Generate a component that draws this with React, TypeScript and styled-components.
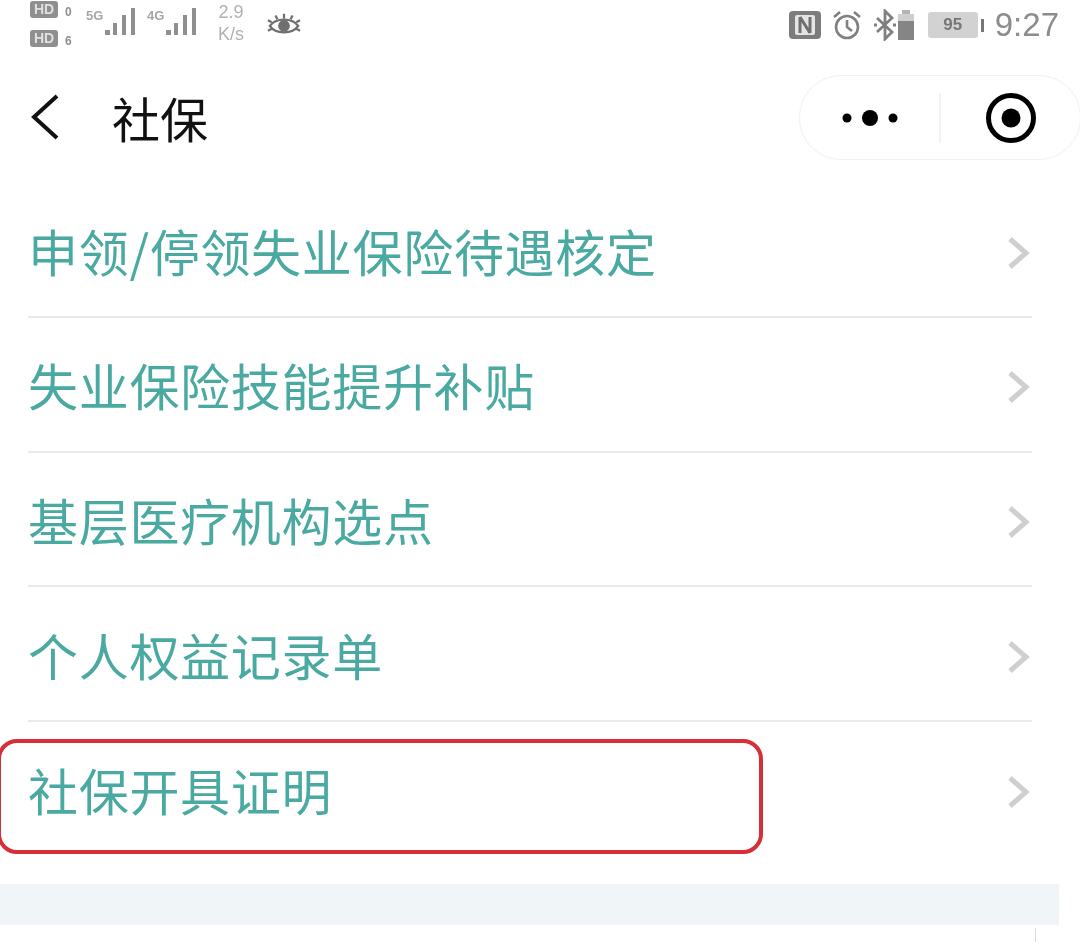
import React from "react";
import styled, { createGlobalStyle } from "styled-components";

const GlobalStyle = createGlobalStyle`
  html, body {
    margin: 0;
    padding: 0;
    background: #fff;
    overflow: hidden;
  }
  body {
    font-family: "Noto Sans CJK SC", "Liberation Sans", sans-serif;
  }
`;

/* the reference is an upscaled phone capture, so everything is a little soft */
const Page = styled.div`
  width: 1080px;
  height: 942px;
  overflow: hidden;
  position: relative;
  background: #fff;
  filter: blur(0.7px);
`;

const StatusBar = styled.div`
  height: 50px;
  padding: 0 21px 0 30px;
  display: flex;
  align-items: center;
  justify-content: space-between;
  color: #8a8a8a;
  font-family: "Liberation Sans", sans-serif;
`;

const StatusGroup = styled.div`
  display: flex;
  align-items: center;
`;

const HdStack = styled.div`
  width: 56px;
  display: flex;
  flex-direction: column;
  gap: 12px;
  margin-top: -3px;
`;

const HdRow = styled.div`
  display: flex;
  align-items: flex-end;
  gap: 7px;
  font-size: 12px;
  line-height: 12px;
  font-weight: 700;
  color: #8f8f8f;
`;

const HdBadge = styled.span`
  width: 28px;
  height: 17px;
  border-radius: 3px;
  background: #8f8f8f;
  color: #e0e0e0;
  font-size: 14px;
  font-weight: 700;
  line-height: 17px;
  text-align: center;
`;

const Signal = styled.div`
  margin-top: -6px;
  position: relative;
  width: 61px;
  height: 30px;
`;

const SignalLabel = styled.span`
  position: absolute;
  left: 0;
  top: 1px;
  font-size: 13px;
  font-weight: 700;
  color: #a6a6a6;
`;

const Speed = styled.div`
  width: 40px;
  margin: -4px 16px 0 3px;
  font-size: 18px;
  line-height: 22px;
  text-align: center;
  color: #b0b0b0;
`;

const IconGap = styled.span<{ $w: number }>`
  width: ${(p) => p.$w}px;
`;

const BatteryPill = styled.div`
  width: 50px;
  height: 26px;
  margin: 0 3px 0 13px;
  border-radius: 3px;
  background: #d2d2d2;
  color: #777;
  font-size: 17px;
  font-weight: 700;
  line-height: 26px;
  text-align: center;
`;

const BatteryTip = styled.div`
  width: 3px;
  height: 13px;
  margin-right: 11px;
  background: #777;
`;

const Clock = styled.span`
  font-size: 33px;
  color: #8c8c8c;
`;

const NavBar = styled.div`
  height: 133.5px;
  display: flex;
  align-items: center;
  position: relative;
  padding-left: 30px;
`;

const NavTitle = styled.span`
  margin-left: 52px;
  font-size: 48px;
  color: #111;
`;

const Capsule = styled.div`
  position: absolute;
  right: -1px;
  top: 25px;
  width: 282px;
  height: 85px;
  box-sizing: border-box;
  border: 1.5px solid #f1f1f1;
  border-radius: 42px;
  display: flex;
  align-items: center;
`;

const CapsuleSide = styled.div`
  flex: 1;
  height: 50px;
  display: flex;
  align-items: center;
  justify-content: center;
  & + & {
    border-left: 2px solid #f3f3f3;
  }
`;

const List = styled.div`
  display: flex;
  flex-direction: column;
`;

const Row = styled.div<{ $last?: boolean }>`
  width: 1004px;
  height: 134.6px;
  margin-left: 28px;
  box-sizing: border-box;
  display: flex;
  align-items: center;
  justify-content: space-between;
  padding-right: 1px;
  border-bottom: ${(p) => (p.$last ? "none" : "2px solid #e9e9e9")};
`;

const RowLabel = styled.span`
  font-size: 50px;
  font-weight: 400;
  letter-spacing: 0.7px;
  line-height: 60px;
  color: #4aa9a1;
`;

const ChevronSlot = styled.span`
  display: flex;
  margin-top: 6px;
`;

const Highlight = styled.div`
  position: absolute;
  left: -3px;
  top: 739px;
  width: 766px;
  height: 115px;
  box-sizing: border-box;
  border: 4px solid #d62f38;
  border-radius: 20px;
`;

const Band = styled.div`
  width: 1059px;
  height: 41px;
  margin-top: 28px;
  background: #f0f6f7;
`;

const BottomTick = styled.div`
  position: absolute;
  left: 1035px;
  top: 928px;
  width: 1px;
  height: 14px;
  background: #d8d8d8;
`;

const items = [
  "申领/停领失业保险待遇核定",
  "失业保险技能提升补贴",
  "基层医疗机构选点",
  "个人权益记录单",
  "社保开具证明",
];

const Bars = () => (
  <svg width="61" height="30" viewBox="0 0 61 30" style={{ position: "absolute", left: 0, top: 0 }}>
    <g fill="#8f8f8f">
      <rect x="19" y="23" width="5" height="5" />
      <rect x="27" y="16" width="4" height="12" />
      <rect x="36" y="8" width="4" height="20" />
      <rect x="45" y="1" width="4" height="27" />
    </g>
  </svg>
);

const Eye = () => (
  <svg width="34" height="28" viewBox="0 0 36 28" fill="none" stroke="#6f6f6f" strokeWidth="2.4">
    <path d="M3 15 C9 6 27 6 33 15 C27 24 9 24 3 15 Z" />
    <circle cx="18" cy="15" r="5" fill="#6f6f6f" />
    <path d="M18 2 V7 M9 4 L11 8 M27 4 L25 8 M1 9 L5 11 M35 9 L31 11 M1 20 L5 18 M35 20 L31 18" />
  </svg>
);

const NfcIcon = () => (
  <svg width="32" height="30" viewBox="0 0 32 30">
    <rect x="0" y="1" width="32" height="28" rx="4" fill="#7c7c7c" />
    <rect x="6" y="5" width="20" height="20" rx="2" fill="#e4e4e4" />
    <path d="M11 7 V23 M11 7 L21 23 M21 7 V23" stroke="#6f6f6f" strokeWidth="3" fill="none" />
  </svg>
);

const AlarmIcon = () => (
  <svg width="32" height="32" viewBox="0 0 32 32" fill="none" stroke="#808080" strokeWidth="2.6">
    <circle cx="16" cy="18" r="11" />
    <path d="M16 11 V18 L21 22 M3 8 L9 3 M29 8 L23 3" />
  </svg>
);

const BluetoothIcon = () => (
  <svg width="24" height="32" viewBox="0 0 24 32" fill="none" stroke="#808080" strokeWidth="2.8">
    <path d="M4 9 L19 23 L12 30 V2 L19 9 L4 23 M1 16 H4 M20 16 H23" />
  </svg>
);

const BatteryIcon = () => (
  <svg width="18" height="30" viewBox="0 0 18 30">
    <rect x="5" y="0" width="8" height="4" fill="#b5b5b5" />
    <rect x="1" y="4" width="16" height="8" fill="#cfcfcf" />
    <rect x="1" y="11" width="16" height="19" fill="#858585" />
  </svg>
);

const BackIcon = () => (
  <svg width="30" height="46" viewBox="0 0 30 46" fill="none" stroke="#111" strokeWidth="4">
    <path d="M27 2 L4 23 L27 44" />
  </svg>
);

const MoreIcon = () => (
  <svg width="58" height="20" viewBox="0 0 58 20" fill="#000">
    <circle cx="6" cy="10" r="4.5" />
    <circle cx="29" cy="10" r="8" />
    <circle cx="52" cy="10" r="4.5" />
  </svg>
);

const TargetIcon = () => (
  <svg width="54" height="54" viewBox="0 0 54 54" fill="none">
    <circle cx="27" cy="27" r="22.5" stroke="#000" strokeWidth="5" />
    <circle cx="27" cy="27" r="9.5" fill="#000" />
  </svg>
);

const Chevron = () => (
  <svg width="24" height="34" viewBox="0 0 24 34" fill="none" stroke="#cfcfcf" strokeWidth="5">
    <path d="M3 3 L19 17 L3 31" />
  </svg>
);

export default function App() {
  return (
    <Page>
      <GlobalStyle />
      <StatusBar>
        <StatusGroup>
          <HdStack>
            <HdRow>
              <HdBadge>HD</HdBadge>
              <span>0</span>
            </HdRow>
            <HdRow>
              <HdBadge>HD</HdBadge>
              <span>6</span>
            </HdRow>
          </HdStack>
          <Signal>
            <SignalLabel>5G</SignalLabel>
            <Bars />
          </Signal>
          <Signal>
            <SignalLabel>4G</SignalLabel>
            <Bars />
          </Signal>
          <Speed>
            2.9
            <br />
            K/s
          </Speed>
          <Eye />
        </StatusGroup>
        <StatusGroup>
          <NfcIcon />
          <IconGap $w={10} />
          <AlarmIcon />
          <IconGap $w={10} />
          <BluetoothIcon />
          <BatteryIcon />
          <BatteryPill>95</BatteryPill>
          <BatteryTip />
          <Clock>9:27</Clock>
        </StatusGroup>
      </StatusBar>
      <NavBar>
        <BackIcon />
        <NavTitle>社保</NavTitle>
        <Capsule>
          <CapsuleSide>
            <MoreIcon />
          </CapsuleSide>
          <CapsuleSide>
            <TargetIcon />
          </CapsuleSide>
        </Capsule>
      </NavBar>
      <List>
        {items.map((item, i) => (
          <Row key={item} $last={i === items.length - 1}>
            <RowLabel>{item}</RowLabel>
            <ChevronSlot>
              <Chevron />
            </ChevronSlot>
          </Row>
        ))}
      </List>
      <Band />
      <Highlight />
      <BottomTick />
    </Page>
  );
}
